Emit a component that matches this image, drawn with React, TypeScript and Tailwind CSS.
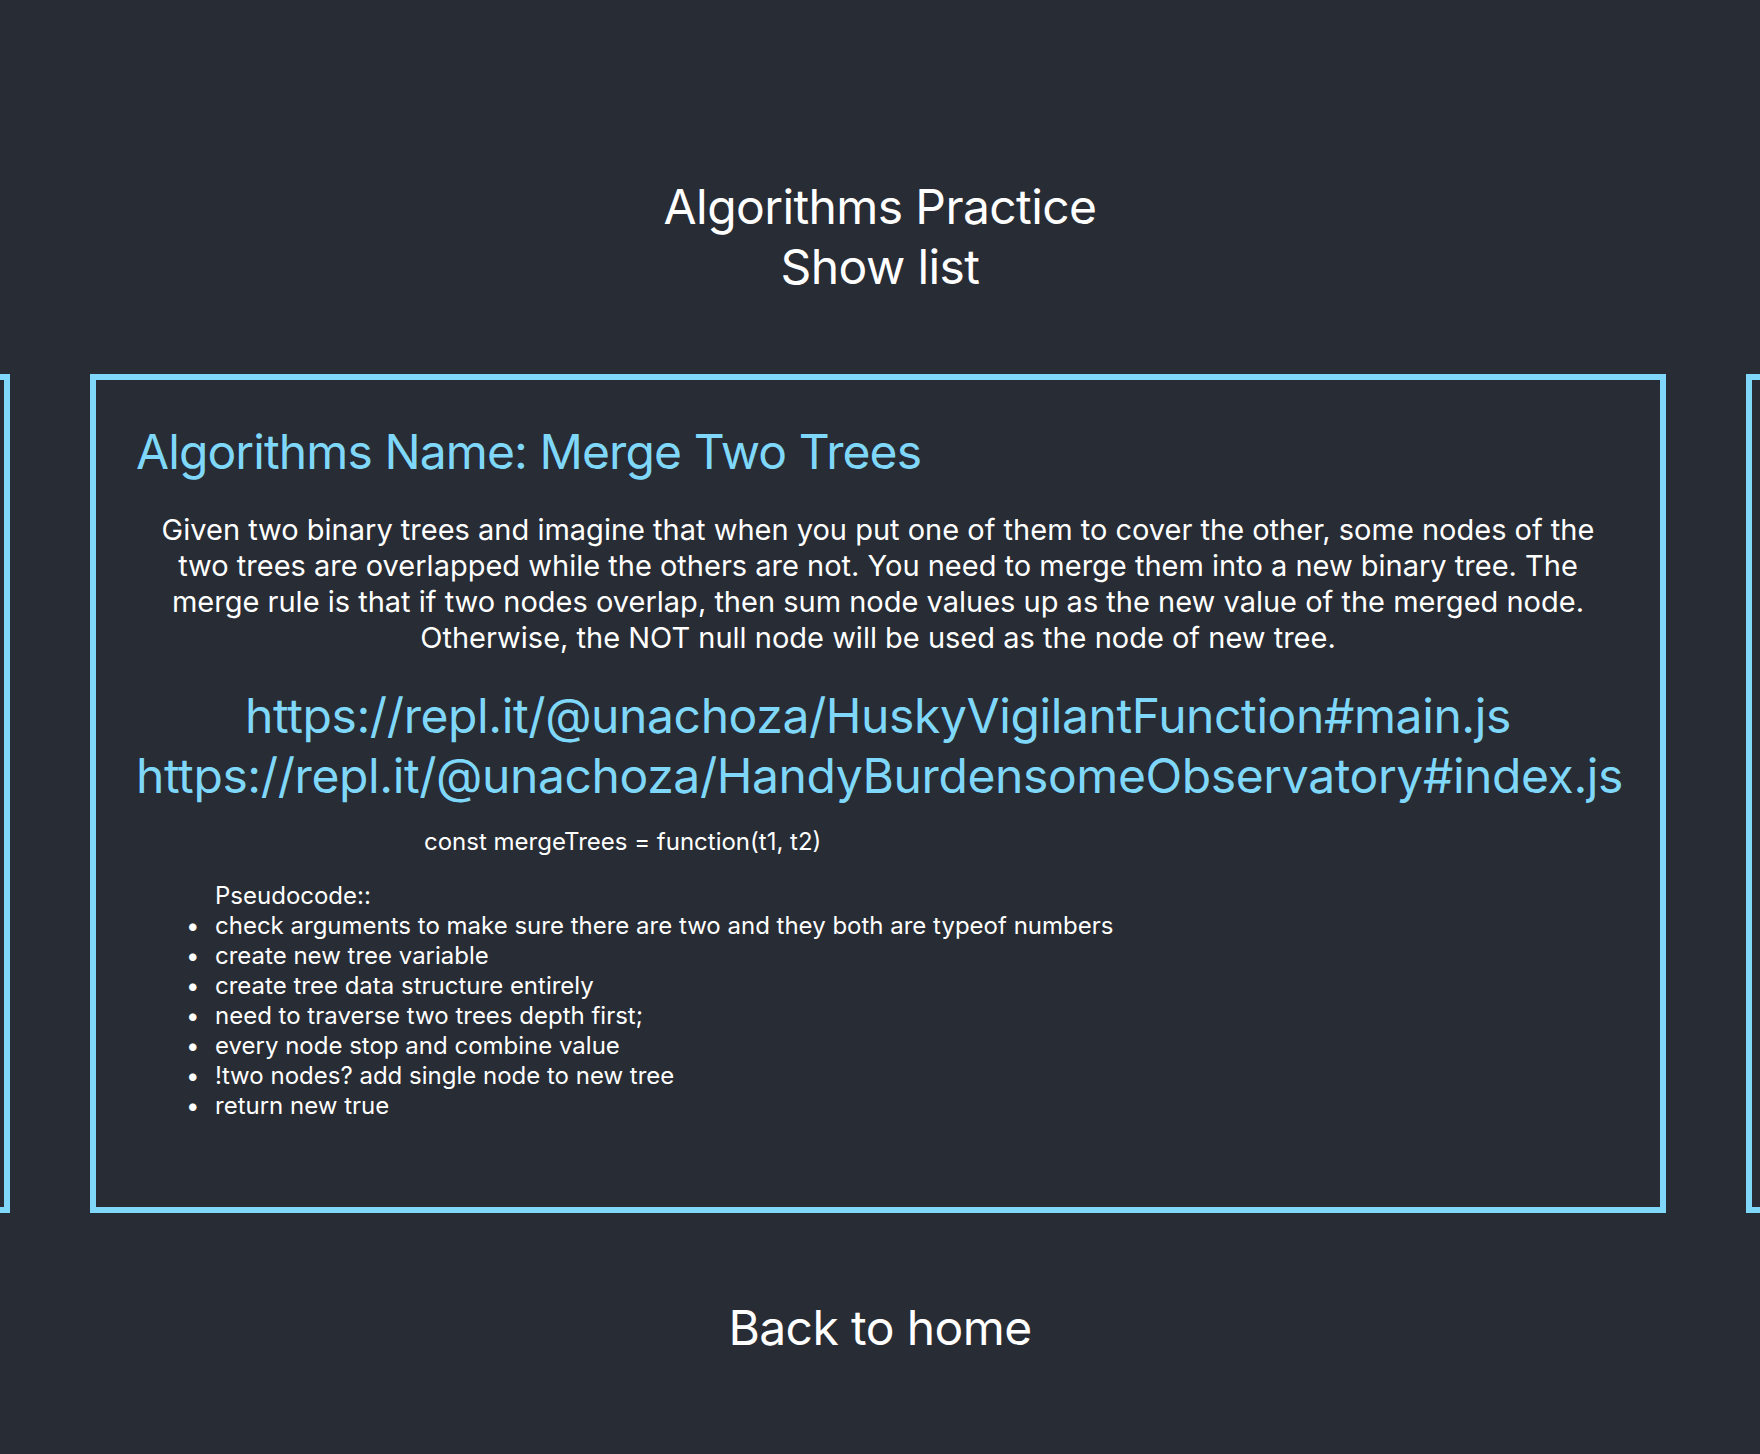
const steps = [
  'check arguments to make sure there are two and they both are typeof numbers',
  'create new tree variable',
  'create tree data structure entirely',
  'need to traverse two trees depth first;',
  'every node stop and combine value',
  '!two nodes? add single node to new tree',
  'return new true'
]

function Slide({ children }: { children?: React.ReactNode }) {
  return (
    <div className="box-border h-[839px] w-[1576px] shrink-0 border-[6px] border-[#7fd8f9] px-[40px] pt-[42px]">
      {children}
    </div>
  )
}

export default function App() {
  return (
    <div className="min-h-screen overflow-hidden bg-[#282c34] font-['Inter','Noto_Sans',sans-serif] text-white">
      <header className="pt-[177px] text-center text-[48px] leading-[60px] tracking-[-0.6px]">
        <h1>Algorithms Practice</h1>
        <p>Show list</p>
      </header>

      <div className="mt-[77px] ml-[-1566px] flex gap-[80px]">
        <Slide />
        <Slide>
          <h2 className="text-[48px] leading-[60px] tracking-[-0.9px] text-[#7fd8f9]">
            Algorithms Name: Merge Two Trees
          </h2>
          <p className="mx-auto mt-[30px] w-[1450px] text-center text-[29px] leading-[36px]">
            Given two binary trees and imagine that when you put one of them to cover the other, some
            nodes of the two trees are overlapped while the others are not. You need to merge them into
            a new binary tree. The merge rule is that if two nodes overlap, then sum node values up as
            the new value of the merged node. Otherwise, the NOT null node will be used as the node of
            new tree.
          </p>
          <div className="mt-[30px] text-center text-[48px] leading-[60px] tracking-[-0.4px] whitespace-nowrap text-[#7fd8f9]">
            <a href="#" className="block">
              https://repl.it/@unachoza/HuskyVigilantFunction#main.js
            </a>
            <a href="#" className="block">
              https://repl.it/@unachoza/HandyBurdensomeObservatory#index.js
            </a>
          </div>
          <p className="mt-[21px] ml-[288px] text-[24px] leading-[30px]">
            const mergeTrees = function(t1, t2)
          </p>
          <div className="mt-[24px] ml-[44px] text-[24px] leading-[30px]">
            <p className="pl-[35px]">Pseudocode::</p>
            <ul>
              {steps.map((s) => (
                <li key={s} className="flex">
                  <span className="w-[35px] shrink-0 pl-[6px]">•</span>
                  {s}
                </li>
              ))}
            </ul>
          </div>
        </Slide>
        <Slide />
      </div>

      <footer className="mt-[85px] pb-[96px] text-center text-[48px] leading-[60px] tracking-[-0.6px]">
        <a href="#">Back to home</a>
      </footer>
    </div>
  )
}
